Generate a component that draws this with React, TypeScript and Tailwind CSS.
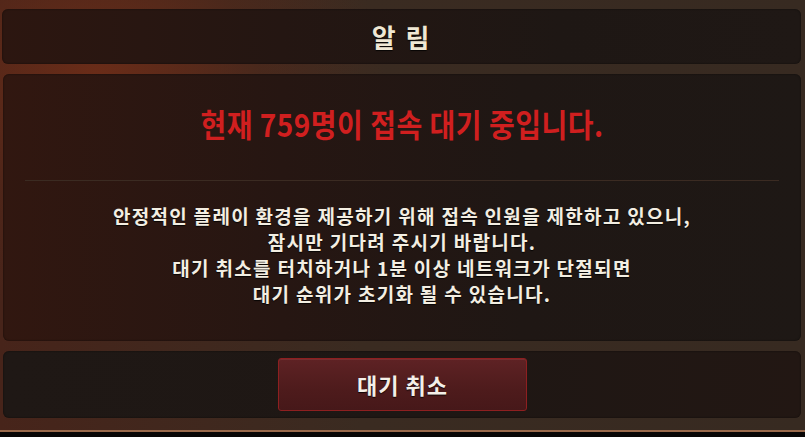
import React from 'react';

const body = [
  '안정적인 플레이 환경을 제공하기 위해 접속 인원을 제한하고 있으니,',
  '잠시만 기다려 주시기 바랍니다.',
  '대기 취소를 터치하거나 1분 이상 네트워크가 단절되면',
  '대기 순위가 초기화 될 수 있습니다.',
];

export default function App() {
  return (
    <div className="w-[805px] h-[437px] bg-[#080606] font-['Noto_Sans_CJK_KR','Noto_Sans',sans-serif] overflow-hidden">
      {/* Frame */}
      <div className="h-[432px] flex flex-col gap-[10px] pt-[9px] pb-[11px] pl-[2px] pr-[4px] border-b-2 border-[#9a6a4c] bg-[radial-gradient(ellipse_45%_70%_at_12%_18%,#6a2c18_0%,rgba(90,40,24,0.4)_45%,transparent_80%),linear-gradient(to_right,#47241a,#3a2b21_45%,#372a21)]">
        {/* Header */}
        <div className="h-[55px] shrink-0 rounded-[6px] flex items-center justify-center bg-[linear-gradient(to_right,#2c1610,#241612_35%,#1e1714_70%,#1f1815)] shadow-[inset_0_0_2px_rgba(0,0,0,0.6)]">
          <h1 className="text-[26px] font-bold text-[#efe7d4] tracking-[2px] leading-none [text-shadow:0_1px_1px_rgba(0,0,0,0.8)]">알 림</h1>
        </div>

        {/* Body */}
        <div className="h-[267px] shrink-0 ml-[1px] rounded-[6px] flex flex-col px-[22px] bg-[linear-gradient(to_right,#311710,#261612_35%,#1f1714_65%,#1e1815)] shadow-[inset_0_0_2px_rgba(0,0,0,0.6)]">
          <div className="h-[106px] flex items-center justify-center pb-[6px]">
            <p className="text-[28px] font-bold text-[#d01f1f] leading-none tracking-[0.5px] scale-y-[1.12]">현재 759명이 접속 대기 중입니다.</p>
          </div>
          <div className="h-px bg-[#3b2b22]" />
          <div className="flex flex-col items-center pt-[22px] text-[19px] font-bold text-[#f3eee2] leading-[26px] tracking-[1.3px] [text-shadow:0_1px_1px_rgba(0,0,0,0.8)]">
            {body.map((line) => (
              <p key={line}>{line}</p>
            ))}
          </div>
        </div>

        {/* Footer */}
        <div className="h-[67px] shrink-0 ml-[1px] rounded-[6px] flex items-center justify-center bg-[linear-gradient(to_right,#1f1815,#1e1714_50%,#221713)] shadow-[inset_0_0_2px_rgba(0,0,0,0.6)]">
          <button className="w-[249px] h-[53px] ml-[1px] rounded-[3px] border border-[#8e1f20] bg-[linear-gradient(to_bottom,#5e2224,#4e1b1c_60%,#461819)] shadow-[inset_0_1px_0_rgba(255,120,120,0.15)] text-[22px] font-bold tracking-[1px] text-[#f4efe8] [text-shadow:0_1px_1px_rgba(0,0,0,0.8)]">
            대기 취소
          </button>
        </div>
      </div>
    </div>
  );
}
